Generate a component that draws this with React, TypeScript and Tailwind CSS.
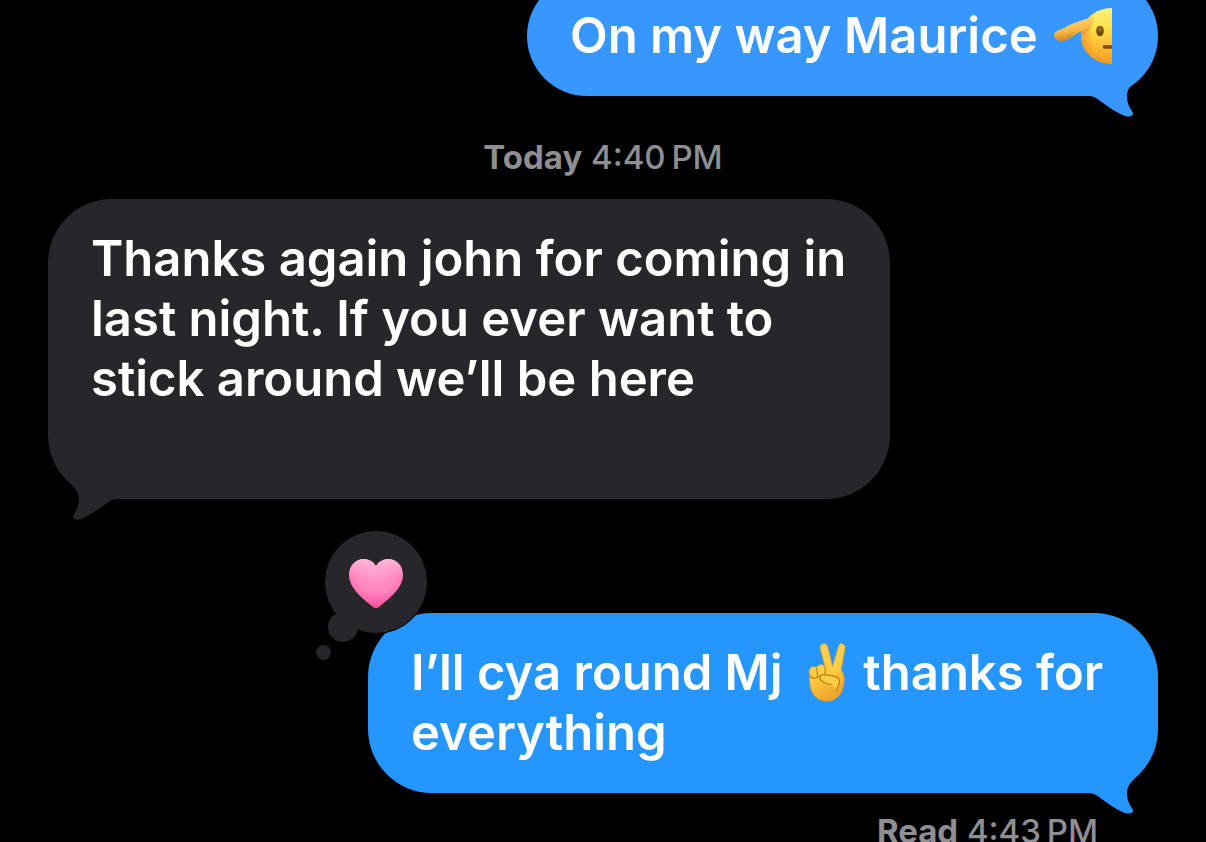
import clsx from "clsx";
import type { ReactNode } from "react";

function SaluteHalf() {
  return (
    <svg viewBox="0 0 60 60" className="ml-1 mr-1 inline-block w-[60px] h-[60px] align-top" role="img" aria-label="Salute">
      <defs>
        <linearGradient id="face" x1="0" y1="0" x2="0" y2="1">
          <stop offset="0" stopColor="#fff27a" />
          <stop offset="0.35" stopColor="#fee04a" />
          <stop offset="0.7" stopColor="#fbbc35" />
          <stop offset="1" stopColor="#f3971f" />
        </linearGradient>
        <radialGradient id="faceEdge" cx="1" cy="0.45" r="1.02">
          <stop offset="0.6" stopColor="#f08a1c" stopOpacity="0" />
          <stop offset="1" stopColor="#e98320" stopOpacity="0.7" />
        </radialGradient>
        <linearGradient id="arm" x1="0.3" y1="0" x2="0.5" y2="1">
          <stop offset="0" stopColor="#ffd56b" />
          <stop offset="0.55" stopColor="#f8b848" />
          <stop offset="1" stopColor="#d98320" />
        </linearGradient>
      </defs>
      <path d="M58 2C41 2 27 14 27 30S41 58 58 58Z" fill="url(#face)" />
      <path d="M58 2C41 2 27 14 27 30S41 58 58 58Z" fill="url(#faceEdge)" />
      <path d="M38 14C38 22 34 26 27 30L29 22Z" fill="#d9802b" opacity="0.35" />
      <path
        d="M36 12C28 14 18 17 10 22C5 24 0 25 0 29C0 33 4 35 9 35C14 34 18 31 22 28C27 25 33 23 37 19C40 16 39 12 36 12Z"
        fill="url(#arm)"
      />
      <path d="M2 32C9 35 14 31 20 26" fill="none" stroke="#c97c1d" strokeWidth="1" opacity="0.5" />
      <ellipse cx="46" cy="25" rx="3.8" ry="5.2" fill="#6f4a0c" />
      <ellipse cx="46" cy="23.5" rx="2" ry="2.4" fill="#946a20" />
      <path d="M58 39.2H50.5A1.8 1.8 0 0 0 50.5 42.8H58Z" fill="#7b4a0c" />
    </svg>
  );
}

function VictoryHand() {
  return (
    <svg viewBox="0 0 42 64" className="ml-3 mr-1 inline-block w-[40px] h-[60px] align-top" role="img" aria-label="Victory hand">
      <defs>
        <linearGradient id="skin" x1="0" y1="0" x2="0.3" y2="1">
          <stop offset="0" stopColor="#ffd257" />
          <stop offset="0.6" stopColor="#ffcc43" />
          <stop offset="1" stopColor="#eda62c" />
        </linearGradient>
      </defs>
      <path
        d="M2 30C2 26 6 24 10 26C11 23 16 22 19 25L14 7C13 3 15 1 17 1C20 0 21 2 22 5L27 25L33 4C34 1 36 0 38 1C40 2 41 4 40 7L36 29C39 32 40 37 39 43C38 54 31 62 21 62C11 62 4 55 3 45L2 34Z"
        fill="url(#skin)"
        stroke="#dc9a2c"
        strokeWidth="0.8"
      />
      <path
        d="M2 33C3 38 8 39 11 36L10 27M11 35C13 37 17 36 19 33L19 26"
        fill="none"
        stroke="#c58220"
        strokeWidth="1.3"
        strokeLinecap="round"
      />
      <path
        d="M26 44C22 44 16 42 14 39C12 35 15 33 19 34C24 35 32 34 34 39C36 44 31 46 31 51"
        fill="#ffcf49"
        stroke="#c07c1a"
        strokeWidth="1.3"
        strokeLinecap="round"
      />
    </svg>
  );
}

function Tail({ className }: { className: string }) {
  return (
    <svg viewBox="0 0 72 62" className={clsx("absolute top-full -mt-10 h-[62px] w-[72px]", className)} aria-hidden="true">
      <path
        d="M0 0H40L50 24C45 29 41 33 41 40C41 49 45 53 47 57C47 61 43 61 39 60C27 55 19 48 10 42Q7 40 3 40H0Z"
        fill="currentColor"
      />
    </svg>
  );
}

const heartPath =
  "M27 7C24 2 19 0 15 0C6 0 0 7 0 16C0 29 13 39 24 48Q27 50 30 48C41 39 54 29 54 16C54 7 48 0 39 0C35 0 30 2 27 7Z";

function Heart() {
  return (
    <svg viewBox="0 0 54 50" className="mt-1 w-[54px] h-[50px]" role="img" aria-label="Loved">
      <defs>
        <radialGradient id="heart" cx="0.5" cy="0.25" r="0.75">
          <stop offset="0" stopColor="#ff9dce" />
          <stop offset="0.55" stopColor="#ff86bf" />
          <stop offset="1" stopColor="#ff4f9f" />
        </radialGradient>
        <linearGradient id="shine" x1="0" y1="0" x2="0" y2="1">
          <stop offset="0" stopColor="#ffc3df" stopOpacity="0.8" />
          <stop offset="0.4" stopColor="#ffb0d6" stopOpacity="0" />
        </linearGradient>
      </defs>
      <path d={heartPath} fill="url(#heart)" />
      <path d={heartPath} fill="url(#shine)" />
    </svg>
  );
}

function Reaction() {
  return (
    <div className="absolute -left-[44px] -top-[83px] text-[#27262b]">
      <div className="flex h-[104px] w-[104px] items-center justify-center rounded-full border border-black bg-current">
        <Heart />
      </div>
      <div className="absolute left-1 top-[82px] h-[30px] w-[30px] rounded-full bg-current" />
      <div className="absolute -left-2 top-[115px] h-[15px] w-[15px] rounded-full bg-current" />
    </div>
  );
}

type BubbleProps = {
  mine?: boolean;
  className: string;
  reaction?: ReactNode;
  children: ReactNode;
};

function Bubble({ mine, className, reaction, children }: BubbleProps) {
  return (
    <div
      className={clsx(
        "relative w-fit rounded-[64px] pl-[43px] pr-10 py-[30px]",
        mine ? "self-end" : "self-start",
        className
      )}
    >
      <Tail className={mine ? "right-0" : "left-0 -scale-x-100"} />
      <p className="relative text-[49px] leading-[60px] font-semibold text-white whitespace-pre-wrap">
        {children}
      </p>
      {reaction}
    </div>
  );
}

export default function App() {
  return (
    <main className="flex h-screen flex-col overflow-hidden bg-black px-12 font-['Inter',sans-serif]">
      <Bubble mine className="-mt-6 shrink-0 bg-[#3797ff] text-[#3797ff]">
        On my way Maurice <SaluteHalf />
      </Bubble>

      <p className="mt-[41px] shrink-0 text-center text-[33px] leading-10 font-medium text-[#8e8e93]">
        <b className="font-bold">Today</b> 4:40{"\u202f"}PM
      </p>

      <Bubble className="mt-[22px] max-w-[842px] shrink-0 bg-[#27262b] text-[#27262b]">
        {"Thanks again john for coming in last night. If you ever want to stick around we’ll be here\n\n"}
      </Bubble>

      <Bubble
        mine
        className="mt-[114px] max-w-[790px] shrink-0 bg-[#2696ff] text-[#2696ff]"
        reaction={<Reaction />}
      >
        I’ll cya round Mj <VictoryHand /> thanks for everything
      </Bubble>

      <p className="mt-[18px] mr-[60px] shrink-0 self-end text-[33px] leading-10 font-medium text-[#8e8e93]">
        <b className="font-bold">Read</b> 4:43{"\u202f"}PM
      </p>
    </main>
  );
}
